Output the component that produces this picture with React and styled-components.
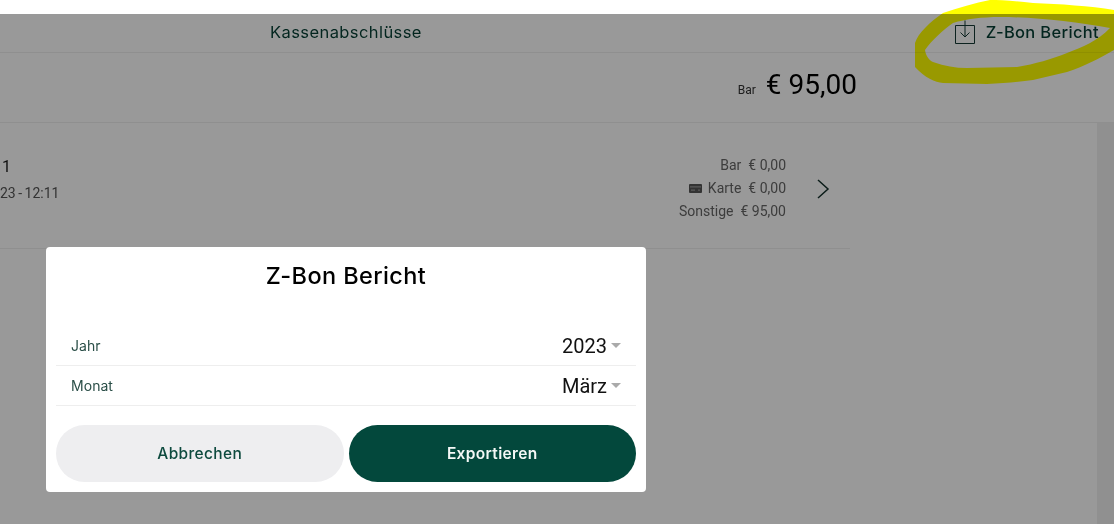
import React from "react";
import styled, { createGlobalStyle } from "styled-components";

const Global = createGlobalStyle`
  html, body {
    margin: 0;
    padding: 0;
    background: #fff;
  }
  body {
    font-family: Roboto, "Liberation Sans", sans-serif;
    overflow: hidden;
  }
`;

const Frame = styled.div`
  position: relative;
  width: 1117px;
  height: 524px;
  padding: 14px 3px 0 0;
  box-sizing: border-box;
  overflow: hidden;
`;

const Screen = styled.div`
  position: relative;
  height: 510px;
  background: #fff;
  display: flex;
  flex-direction: column;
  overflow: hidden;
`;

const TopBar = styled.header`
  height: 39px;
  flex: none;
  display: grid;
  grid-template-columns: 270px 1fr auto;
  align-items: center;
  padding: 0 15px 3px 0;
  box-sizing: border-box;
  border-bottom: 1px solid #eee;
`;

const PageTitle = styled.h1`
  grid-column: 2;
  margin: 0;
  font: 400 16.5px Inter, sans-serif;
  letter-spacing: 0.42px;
  color: #053f34;
`;

const ReportLink = styled.a`
  grid-column: 3;
  display: flex;
  align-items: center;
  gap: 11px;
  font: 500 16.5px Inter, sans-serif;
  letter-spacing: 0.33px;
  color: #053f34;
`;

const Body = styled.div`
  flex: 1;
  display: flex;
  min-height: 0;
`;

const Main = styled.main`
  flex: 1;
  min-width: 0;
`;

const Scrollbar = styled.div`
  width: 17px;
  flex: none;
  background: #f1f1f1;
`;

const TotalBar = styled.div`
  height: 70px;
  flex: none;
  display: flex;
  justify-content: flex-end;
  align-items: center;
  gap: 10px;
  padding: 0 257px 6px 0;
  box-sizing: border-box;
  border-bottom: 1px solid #eee;
`;

const TotalLabel = styled.span`
  font-size: 12px;
  color: #333;
  padding-top: 11px;
`;

const TotalValue = styled.span`
  font-size: 28px;
  color: #000;
`;

const ClosingRow = styled.div`
  width: 850px;
  height: 126px;
  box-sizing: border-box;
  display: flex;
  align-items: center;
  justify-content: space-between;
  padding: 0 20px 0 0;
  border-bottom: 1px solid #eee;
`;

const ClosingInfo = styled.div`
  display: flex;
  flex-direction: column;
  gap: 9px;
  margin-top: -13px;
`;

const ClosingNumber = styled.span`
  font-size: 16px;
  color: #1c1c1c;
  padding-left: 2px;
`;

const ClosingDate = styled.span`
  font-size: 14px;
  word-spacing: -1px;
  color: #555;
`;

const ClosingRight = styled.div`
  display: flex;
  align-items: center;
  gap: 30px;
  margin-top: 6px;
`;

const Amounts = styled.div`
  display: flex;
  flex-direction: column;
  align-items: flex-end;
  gap: 6px;
  font-size: 14px;
  line-height: 17px;
  color: #666;
`;

const AmountLine = styled.div`
  display: flex;
  align-items: center;
  gap: 6px;
`;

const Overlay = styled.div`
  position: absolute;
  inset: 0;
  background: rgba(0, 0, 0, 0.4);
`;

const Modal = styled.div`
  position: absolute;
  left: 46px;
  top: 233px;
  width: 600px;
  height: 245px;
  box-sizing: border-box;
  background: #fff;
  border-radius: 4px;
  padding: 0 10px;
  display: flex;
  flex-direction: column;
`;

const ModalTitle = styled.h2`
  margin: 0;
  height: 79px;
  padding-top: 14px;
  box-sizing: border-box;
  text-align: center;
  font: 500 23.5px Inter, sans-serif;
  letter-spacing: 0.4px;
  color: #000;
`;

const Field = styled.div`
  height: 40px;
  box-sizing: border-box;
  display: flex;
  align-items: center;
  justify-content: space-between;
  padding: 0 15px;
  border-bottom: 1px solid #eee;
`;

const FieldLabel = styled.label`
  font: 400 14px Inter, sans-serif;
  letter-spacing: 0.05px;
  color: #2b4f48;
`;

const FieldValue = styled.span`
  display: flex;
  align-items: center;
  gap: 4px;
  font-size: 20px;
  color: #111;
`;

const Caret = styled.i`
  width: 0;
  height: 0;
  border-left: 5px solid transparent;
  border-right: 5px solid transparent;
  border-top: 5px solid #aaa;
`;

const Actions = styled.div`
  display: flex;
  gap: 5px;
  margin-top: 19px;
`;

const Button = styled.button`
  flex: 1;
  height: 57px;
  border: 0;
  border-radius: 29px;
  font: 500 15.5px Inter, sans-serif;
  font-weight: ${(p) => (p.$primary ? 600 : 500)};
  letter-spacing: ${(p) => (p.$primary ? "0.35px" : "0.35px")};
  background: ${(p) => (p.$primary ? "#03483c" : "#eeeef0")};
  color: ${(p) => (p.$primary ? "#f4f8f6" : "#0d4a3e")};
`;

const Scribble = styled.svg`
  position: absolute;
  left: 0;
  top: 0;
  pointer-events: none;
  mix-blend-mode: multiply;
`;

const DownloadIcon = () => (
  <svg width="20" height="24" viewBox="0 0 20 24" fill="none" stroke="#143a34" strokeWidth="1">
    <path d="M.5 5.5h19v18H.5z" />
    <path d="M10 .5v16.5M5.5 12.5l4.5 4.5 4.5-4.5" />
  </svg>
);

const CardIcon = () => (
  <svg width="13" height="9" viewBox="0 0 13 9">
    <rect width="13" height="9" rx="1" fill="#555" />
    <path fill="#999" d="M1 2.2h11v1.2H1zM2 5.6h4v1.2H2zM9 5.6h2v1.2H9z" />
  </svg>
);

const ChevronIcon = () => (
  <svg width="14" height="20" viewBox="0 0 14 20" fill="none" stroke="#14302b" strokeWidth="1.5">
    <path d="M2 1l10 9-10 9" />
  </svg>
);

export default function App() {
  return (
    <Frame>
      <Global />
      <Screen>
        <TopBar>
          <PageTitle>Kassenabschlüsse</PageTitle>
          <ReportLink>
            <DownloadIcon />
            Z-Bon Bericht
          </ReportLink>
        </TopBar>
        <TotalBar>
          <TotalLabel>Bar</TotalLabel>
          <TotalValue>€ 95,00</TotalValue>
        </TotalBar>
        <Body>
          <Main>
            <ClosingRow>
              <ClosingInfo>
                <ClosingNumber>1</ClosingNumber>
                <ClosingDate>23 - 12:11</ClosingDate>
              </ClosingInfo>
              <ClosingRight>
                <Amounts>
                  <AmountLine>Bar&nbsp; € 0,00</AmountLine>
                  <AmountLine>
                    <CardIcon />
                    Karte&nbsp; € 0,00
                  </AmountLine>
                  <AmountLine>Sonstige&nbsp; € 95,00</AmountLine>
                </Amounts>
                <ChevronIcon />
              </ClosingRight>
            </ClosingRow>
          </Main>
          <Scrollbar />
        </Body>
        <Overlay />
        <Modal>
          <ModalTitle>Z-Bon Bericht</ModalTitle>
          <Field>
            <FieldLabel>Jahr</FieldLabel>
            <FieldValue>
              2023
              <Caret />
            </FieldValue>
          </Field>
          <Field>
            <FieldLabel>Monat</FieldLabel>
            <FieldValue>
              März
              <Caret />
            </FieldValue>
          </Field>
          <Actions>
            <Button>Abbrechen</Button>
            <Button $primary>Exportieren</Button>
          </Actions>
        </Modal>
      </Screen>
      <Scribble width="1117" height="524" viewBox="0 0 1117 524">
        <path
          fill="#ffff00"
          fillRule="evenodd"
          d="M1114 10 C1090 6 1060 4 1033 3 C1015 1 1000 0 990 0 C975 3 958 8 943 13 C930 22 918 33 915 43 L915 67 C925 78 935 82 943 83 L987 84 C1005 83 1020 82 1033 80 L1067 72 C1085 66 1100 58 1114 50 Z
             M1110 28 C1075 22 1035 17 1000 17 C982 17 966 19 953 23 C943 30 932 40 925 50 C926 56 929 60 933 62 C945 66 955 68 967 68 L1017 67 C1035 64 1052 59 1067 53 C1082 47 1098 41 1110 28 Z"
        />
      </Scribble>
    </Frame>
  );
}
